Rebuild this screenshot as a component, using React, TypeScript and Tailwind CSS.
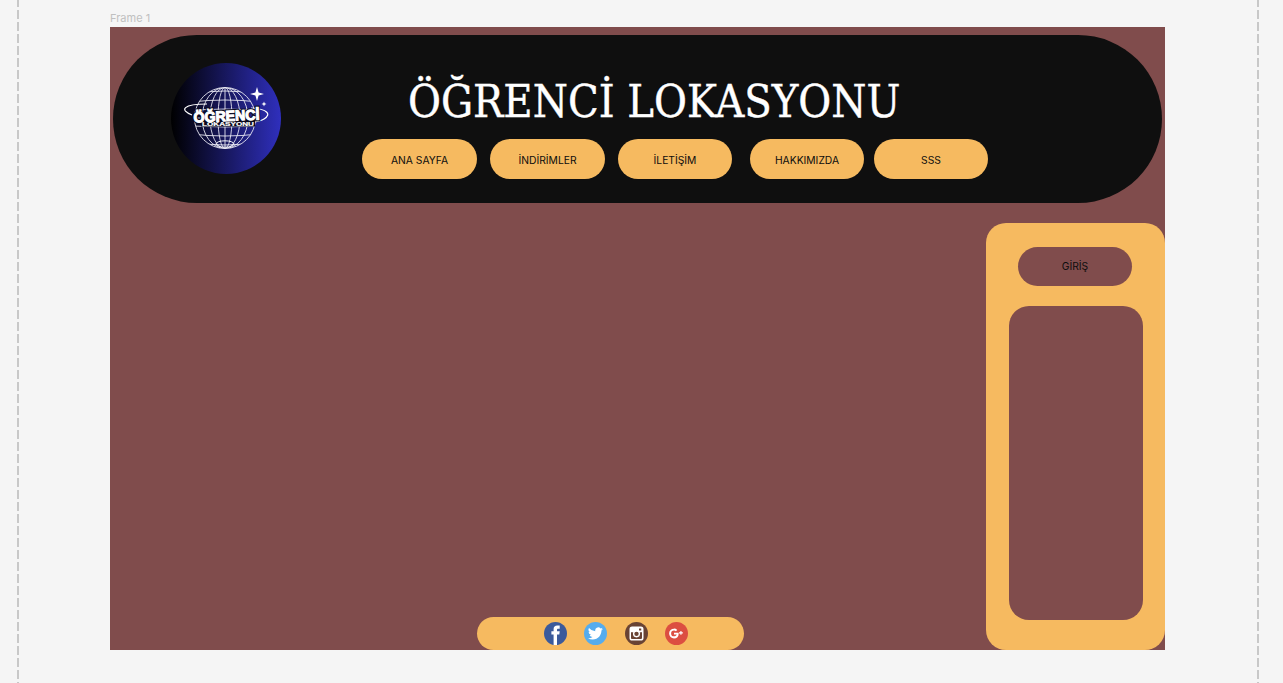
const uiFont = "font-['Inter',sans-serif]";

function NavButton({ label, className }: { label: string; className?: string }) {
  return (
    <div className={`flex h-[39.5px] items-center justify-center rounded-[20px] bg-[#f6ba60] pt-[4px] text-[10.3px] text-[#0d0d0d] ${className ?? ''}`}>
      {label}
    </div>
  );
}

// Logo: globe, ring and stars on a black-to-blue disc
function Logo() {
  const lats = [-24, -16, -8, 0, 8, 16, 24];
  const lons = [7, 15, 23];
  return (
    <svg width="110" height="111" viewBox="0 0 110 111" className="shrink-0">
      <defs>
        <linearGradient id="disc" x1="0" y1="0" x2="1" y2="0">
          <stop offset="0" stopColor="#000000" />
          <stop offset="1" stopColor="#2f2fbd" />
        </linearGradient>
        <clipPath id="globe">
          <circle cx="54" cy="55" r="30.5" />
        </clipPath>
      </defs>
      <ellipse cx="55" cy="55.5" rx="55" ry="55.5" fill="url(#disc)" />
      <g fill="none" stroke="#f0f0f8" strokeWidth="0.85">
        <circle cx="54" cy="55" r="30.5" />
        <g clipPath="url(#globe)">
          {lats.map((y) => (
            <path key={y} d={`M20 ${55 + y} Q54 ${55 + y + y * 0.25} 88 ${55 + y}`} />
          ))}
          <line x1="54" y1="24" x2="54" y2="86" />
          {lons.map((x) => (
            <ellipse key={x} cx="54" cy="55" rx={x} ry="30.5" />
          ))}
        </g>
        <ellipse cx="54" cy="81" rx="9" ry="3.2" strokeWidth="1" />
        <path d="M21 52 C8 47 12 41 36 41 M80 45 C96 46 101 51 93 56 C88 59 82 59 77 60" stroke="#ffffff" strokeWidth="1.2" />
      </g>
      <path d="M86 24 L87.6 29.4 L93 31 L87.6 32.6 L86 38 L84.4 32.6 L79 31 L84.4 29.4 Z" fill="#ffffff" />
      <path d="M93 38.5 L93.7 40.3 L95.5 41 L93.7 41.7 L93 43.5 L92.3 41.7 L90.5 41 L92.3 40.3 Z" fill="#ffffff" />
      <rect x="30" y="56" width="54" height="7.5" fill="#0a0a1e" />
      <g transform="rotate(-2.5 55 55)" fontFamily="'Liberation Sans',sans-serif" fontWeight="700" fontSize="14.5">
        <text x="22.5" y="58" fill="#0a0a1e" stroke="#0a0a1e" strokeWidth="3.2" textLength="66" lengthAdjust="spacingAndGlyphs">
          ÖĞRENCİ
        </text>
        <text x="22.5" y="58" fill="#ffffff" stroke="#ffffff" strokeWidth="1.1" textLength="66" lengthAdjust="spacingAndGlyphs">
          ÖĞRENCİ
        </text>
      </g>
      <text x="31" y="62.8" fill="#ffffff" stroke="#ffffff" strokeWidth="0.2" fontFamily="'Liberation Sans',sans-serif" fontWeight="700" fontSize="6.2" textLength="52" lengthAdjust="spacingAndGlyphs">
        LOKASYONU
      </text>
    </svg>
  );
}

function FacebookIcon() {
  return (
    <svg viewBox="0 0 23 23" className="h-[23px] w-[23px]" fill="#ffffff">
      <path d="M9.6 23 V12.6 H7.4 V9.2 H9.6 V7.1 C9.6 4.6 11 3.4 13.3 3.4 H15.7 V6.8 H14.1 C13.3 6.8 13 7.2 13 8 V9.2 H15.7 L15.3 12.6 H13 V23 Z" />
    </svg>
  );
}

function TwitterIcon() {
  return (
    <svg viewBox="0 0 24 24" className="h-[15px] w-[15px]" fill="#ffffff">
      <path d="M23.9 4.6a9.8 9.8 0 0 1-2.8.8 4.9 4.9 0 0 0 2.1-2.7 9.7 9.7 0 0 1-3.1 1.2 4.9 4.9 0 0 0-8.4 4.5A13.9 13.9 0 0 1 1.6 3.2a4.9 4.9 0 0 0 1.5 6.6 4.9 4.9 0 0 1-2.2-.6v.1a4.9 4.9 0 0 0 3.9 4.8 4.9 4.9 0 0 1-2.2.1 4.9 4.9 0 0 0 4.6 3.4A9.9 9.9 0 0 1 0 19.5a13.9 13.9 0 0 0 7.5 2.2c9.1 0 14-7.5 14-14v-.6a10 10 0 0 0 2.4-2.5z" />
    </svg>
  );
}

function InstagramIcon() {
  return (
    <svg viewBox="0 0 24 24" className="h-[15px] w-[15px]">
      <rect x="2" y="2" width="20" height="20" rx="3" fill="#694334" stroke="#ffffff" strokeWidth="2.4" />
      <rect x="2" y="2" width="20" height="8" rx="2" fill="#ffffff" />
      <circle cx="12" cy="12.5" r="4.6" fill="#694334" stroke="#ffffff" strokeWidth="2.2" />
      <rect x="16" y="4" width="3.6" height="3.2" fill="#694334" />
    </svg>
  );
}

function GooglePlusIcon() {
  return (
    <svg viewBox="0 0 24 24" className="h-[15px] w-[15px]" fill="#ffffff">
      <path d="M8 10.6 v3 h4.3 c-.4 1.6-1.9 2.9-4.3 2.9 a4.6 4.6 0 1 1 0-9.2 c1.2 0 2.2.4 3 1.1 l2.2-2.2 A7.7 7.7 0 0 0 8 4.2 a7.8 7.8 0 1 0 0 15.6 c4.5 0 7.5-3.2 7.5-7.6 0-.6-.1-1.1-.2-1.6 Z" />
      <path d="M20 10 v-2.2 h-1.8 V10 H16 v1.8 h2.2 V14 H20 v-2.2 h2.2 V10 Z" />
    </svg>
  );
}

function SocialLinks() {
  return (
    <div className="flex gap-[17.3px] pl-[11px]">
      <div className="h-[23px] w-[23px] overflow-hidden rounded-full bg-[#3b5a9b]">
        <FacebookIcon />
      </div>
      <div className="flex h-[23px] w-[23px] items-center justify-center rounded-full bg-[#55acee]">
        <TwitterIcon />
      </div>
      <div className="flex h-[23px] w-[23px] items-center justify-center rounded-full bg-[#694334]">
        <InstagramIcon />
      </div>
      <div className="flex h-[23px] w-[23px] items-center justify-center rounded-full bg-[#dc4e41]">
        <GooglePlusIcon />
      </div>
    </div>
  );
}

export default function App() {
  return (
    <div className={`flex h-[683px] overflow-hidden bg-[#f5f5f5] ${uiFont}`}>
      {/* Guide lines */}
      <div className="ml-[17px] h-full w-[2px] shrink-0 bg-[repeating-linear-gradient(to_bottom,#c8c8c8_0,#c8c8c8_7px,transparent_7px,transparent_10px,#c8c8c8_10px,#c8c8c8_12px)]" />

      <div className="ml-[91px] w-[1055px] shrink-0">
        <div className="flex h-[27px] items-start pt-[11px] text-[11px] leading-[14px] text-[#c0c0c0]">Frame 1</div>

        {/* Frame */}
        <div className="flex h-[623px] flex-col bg-[#804c4c]">
          <header className="ml-[3px] mt-[8px] flex h-[167.5px] w-[1049px] shrink-0 rounded-[84px] bg-[#0f0f0f]">
            <div className="ml-[58px] mt-[28px]">
              <Logo />
            </div>
            <div className="ml-[81px] flex h-full flex-col">
              <h1 className="ml-[46px] mt-[37px] h-[67px] whitespace-nowrap font-['DejaVu_Serif_Condensed','DejaVu_Serif',serif] text-[44.7px] leading-[60px] text-white [-webkit-text-stroke:0.4px_white]">
                ÖĞRENCİ LOKASYONU
              </h1>
              <nav className="flex">
                <NavButton label="ANA SAYFA" className="w-[115px]" />
                <NavButton label="İNDİRİMLER" className="ml-[13px] w-[115px]" />
                <NavButton label="İLETİŞİM" className="ml-[13px] w-[114px]" />
                <NavButton label="HAKKIMIZDA" className="ml-[18px] w-[114px]" />
                <NavButton label="SSS" className="ml-[10px] w-[114px]" />
              </nav>
            </div>
          </header>

          <div className="mt-[20px] flex flex-1 items-end">
            <footer className="ml-[367px] flex h-[33.5px] w-[267px] items-center justify-center rounded-[17px] bg-[#f6ba60]">
              <SocialLinks />
            </footer>
            <aside className="ml-auto flex h-[427.5px] w-[179px] flex-col rounded-[20px] bg-[#f6ba60]">
              <div className="ml-[32px] mt-[24.5px] flex h-[39px] w-[114px] items-center justify-center rounded-[20px] bg-[#804c4c] text-[10.3px] text-[#0d0d0d]">
                GİRİŞ
              </div>
              <div className="ml-[23px] mt-[20px] h-[314px] w-[133.5px] rounded-[20px] bg-[#804c4c]" />
            </aside>
          </div>
        </div>
      </div>

      {/* Guide lines */}
      <div className="ml-[92px] h-full w-[2px] shrink-0 bg-[repeating-linear-gradient(to_bottom,#c8c8c8_0,#c8c8c8_7px,transparent_7px,transparent_10px,#c8c8c8_10px,#c8c8c8_12px)]" />
    </div>
  );
}
